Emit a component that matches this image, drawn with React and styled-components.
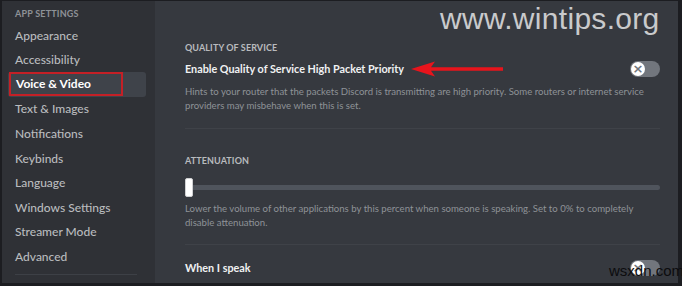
import styled, { createGlobalStyle } from "styled-components";

const GlobalStyle = createGlobalStyle`
  html, body {
    margin: 0;
    padding: 0;
    background: #1c1d21;
  }
  #root {
    width: 682px;
    height: 286px;
    overflow: hidden;
  }
`;

const sideItems = [
  "Appearance",
  "Accessibility",
  "Voice & Video",
  "Text & Images",
  "Notifications",
  "Keybinds",
  "Language",
  "Windows Settings",
  "Streamer Mode",
  "Advanced",
];

const App = () => {
  return (
    <>
      <GlobalStyle />
      <Frame>
        <Sidebar>
          <SideHeader>App Settings</SideHeader>
          {sideItems.map((item) => (
            <SideItem key={item} $active={item === "Voice & Video"}>
              {item === "Voice & Video" ? <Marked>{item}</Marked> : item}
            </SideItem>
          ))}
          <SideDivider />
        </Sidebar>
        <Main>
          <Section>
            <SectionTitle>Quality of Service</SectionTitle>
            <SettingRow>
              <SettingLabel>
                Enable Quality of Service High Packet Priority
                <Arrow width="94" height="16" viewBox="0 0 94 16">
                  <path d="M0 8 L24 0.5 L20 6.3 L92 6.3 L92 9.7 L20 9.7 L24 15.5 Z" fill="#e8141c" />
                </Arrow>
              </SettingLabel>
              <Toggle />
            </SettingRow>
            <Note $top={8}>
              Hints to your router that the packets Discord is transmitting are high priority. Some routers or internet service
              providers may misbehave when this is set.
            </Note>
          </Section>
          <Divider $top={15} />
          <Section $top={25}>
            <SectionTitle>Attenuation</SectionTitle>
            <Slider>
              <Knob />
            </Slider>
            <Note>
              Lower the volume of other applications by this percent when someone is speaking. Set to 0% to completely
              disable attenuation.
            </Note>
          </Section>
          <Divider $top={14} />
          <SettingRow $top={15}>
            <SettingLabel>When I speak</SettingLabel>
            <Toggle />
          </SettingRow>
        </Main>
        <Watermark>www.wintips.org</Watermark>
        <Stamp>wsxdn.com</Stamp>
      </Frame>
    </>
  );
};

export default App;

const Frame = styled.div`
  position: relative;
  display: flex;
  width: 682px;
  height: 286px;
  box-sizing: border-box;
  padding: 1px 4px 3px 2px;
  font-family: Lato, "Open Sans", sans-serif;
`;

const Sidebar = styled.nav`
  width: 153px;
  flex-shrink: 0;
  background: #2f3136;
  padding: 5px 9px 0 6px;
  box-sizing: border-box;
  display: flex;
  flex-direction: column;
`;

const SideHeader = styled.div`
  font-size: 9px;
  font-weight: 700;
  text-transform: uppercase;
  color: #8e9297;
  padding-left: 7px;
  height: 17px;
  line-height: 16px;
  letter-spacing: 0.2px;
`;

const SideItem = styled.div`
  height: 24.55px;
  padding-left: 7px;
  border-radius: 3px;
  font-size: 12px;
  color: ${(p) => (p.$active ? "#ffffff" : "#b9bbbe")};
  font-weight: ${(p) => (p.$active ? 700 : 500)};
  background: ${(p) => (p.$active ? "#3f434a" : "transparent")};
  display: flex;
  align-items: center;
`;

const Marked = styled.span`
  margin-left: -6px;
  padding: 0 5px;
  height: 20px;
  line-height: 20px;
  width: 100px;
  border: 2px solid #c42026;
`;

const SideDivider = styled.div`
  margin: 6px 0 0 7px;
  height: 1px;
  background: #3d4046;
  width: 122px;
`;

const Main = styled.main`
  flex: 1;
  background: #36393f;
  padding: 40px 18px 0 30px;
  box-sizing: border-box;
  display: flex;
  flex-direction: column;
`;

const Section = styled.section`
  margin-top: ${(p) => p.$top || 0}px;
`;

const SectionTitle = styled.div`
  font-size: 9px;
  font-weight: 700;
  text-transform: uppercase;
  color: #b9bbbe;
  letter-spacing: 0.1px;
  line-height: 14px;
`;

const SettingRow = styled.div`
  display: flex;
  align-items: center;
  justify-content: space-between;
  margin-top: ${(p) => p.$top || 6}px;
`;

const SettingLabel = styled.div`
  display: flex;
  align-items: center;
  font-size: 10.8px;
  font-weight: 700;
  color: #f0f1f2;
  line-height: 16px;
`;

const Arrow = styled.svg`
  margin-left: 7px;
`;

const Toggle = styled.div`
  position: relative;
  width: 30px;
  height: 16px;
  border-radius: 8px;
  background: #72767d;
  &::before {
    content: "×";
    position: absolute;
    left: 1px;
    top: 1px;
    width: 14px;
    height: 14px;
    border-radius: 50%;
    background: #ffffff;
    color: #72767d;
    font: 700 13px/13px "DejaVu Sans", sans-serif;
    text-align: center;
  }
`;

const Note = styled.p`
  margin: ${(p) => p.$top || 0}px 0 0;
  font-size: 9.6px;
  line-height: 14px;
  color: #8e9297;
`;

const Divider = styled.div`
  height: 1px;
  background: #3f4248;
  margin-top: ${(p) => p.$top || 14}px;
`;

const Slider = styled.div`
  position: relative;
  margin: 17px 0 12px 4px;
  height: 5px;
  border-radius: 3px;
  background: #4f545c;
`;

const Knob = styled.div`
  position: absolute;
  left: -4px;
  top: -7px;
  width: 6px;
  height: 17px;
  border-radius: 2px;
  background: #ffffff;
  border: 1px solid #cfd0d2;
`;

const Watermark = styled.div`
  position: absolute;
  top: 2px;
  left: 440px;
  font-family: "Liberation Sans", Arial, sans-serif;
  font-size: 30px;
  color: #c9cacc;
  letter-spacing: 0.3px;
`;

const Stamp = styled.div`
  position: absolute;
  top: 262px;
  left: 609px;
  font-family: "Liberation Sans", Arial, sans-serif;
  font-size: 15px;
  color: #0c0c0e;
`;
